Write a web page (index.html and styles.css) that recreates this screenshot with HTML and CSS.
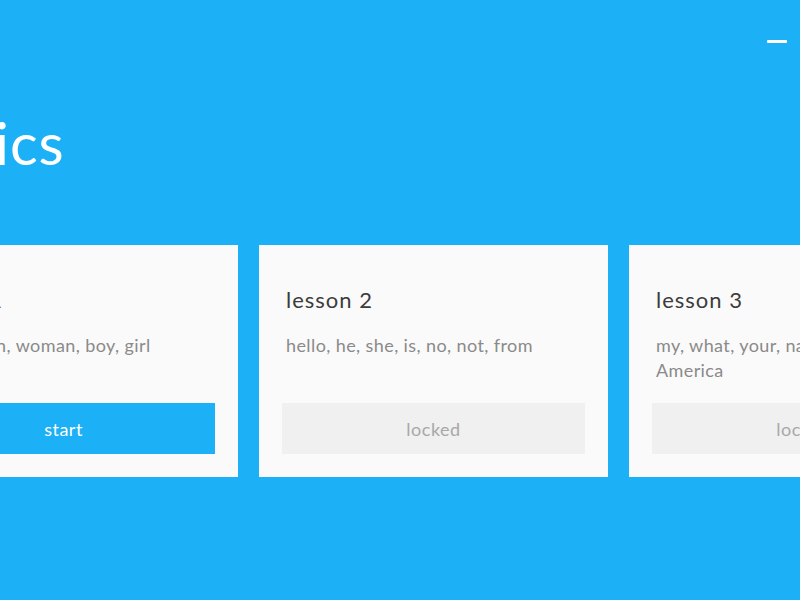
FILE: index.html
```html
<!DOCTYPE html>
<html lang="en">
<head>
<meta charset="utf-8">
<title>Basics</title>
<link rel="stylesheet" href="styles.css">
</head>
<body>
  <header class="topbar">
    <button class="minimize" aria-label="Minimize"><span class="minimize-bar"></span></button>
  </header>
  <main class="stage">
    <h1 class="skill-title">Basics</h1>
    <section class="lessons">
      <article class="lesson">
        <h2 class="lesson-name">lesson 1</h2>
        <p class="lesson-words">the, a, man, woman, boy, girl</p>
        <button class="lesson-btn lesson-btn--start">start</button>
      </article>
      <article class="lesson">
        <h2 class="lesson-name">lesson 2</h2>
        <p class="lesson-words">hello, he, she, is, no, not, from</p>
        <button class="lesson-btn lesson-btn--locked">locked</button>
      </article>
      <article class="lesson">
        <h2 class="lesson-name">lesson 3</h2>
        <p class="lesson-words">my, what, your, name, I, am, from America</p>
        <button class="lesson-btn lesson-btn--locked">locked</button>
      </article>
    </section>
  </main>
</body>
</html>
```
FILE: styles.css
```css
* {
  box-sizing: border-box;
}

html, body {
  margin: 0;
  height: 100%;
}

body {
  background: #1cb0f6;
  font-family: Lato, "Open Sans", sans-serif;
  overflow: hidden;
}

.topbar {
  display: flex;
  justify-content: flex-end;
  height: 108px;
  padding: 40px 13px 0 0;
}

.minimize {
  width: 20px;
  height: 3px;
  padding: 0;
  border: 0;
  background: none;
  cursor: pointer;
}

.minimize-bar {
  display: block;
  width: 20px;
  height: 3px;
  border-radius: 1px;
  background: #ffffff;
}

.stage {
  margin-left: -111px;
}

.skill-title {
  margin: 0;
  padding-left: 12px;
  font-size: 58px;
  line-height: 70px;
  font-weight: 400;
  color: #ffffff;
  letter-spacing: 1px;
}

.lessons {
  display: flex;
  gap: 21px;
  margin-top: 67px;
}

.lesson {
  flex: 0 0 349px;
  height: 232px;
  display: flex;
  flex-direction: column;
  padding: 40px 23px 23px;
  background: #fafafa;
}

.lesson-name {
  margin: 0;
  padding: 0 4px;
  font-size: 22px;
  line-height: 30px;
  font-weight: 400;
  letter-spacing: 1px;
  color: #3c3c3c;
}

.lesson-words {
  margin: 18px 0 0;
  padding: 0 4px;
  font-size: 18px;
  line-height: 25px;
  letter-spacing: 0.4px;
  color: #8a8a8a;
}

.lesson-btn {
  margin-top: auto;
  height: 51px;
  border: 0;
  font-family: inherit;
  font-size: 18px;
  letter-spacing: 0.5px;
}

.lesson-btn--start {
  background: #1cb0f6;
  color: #ffffff;
}

.lesson-btn--locked {
  background: #f0f0f0;
  color: #a8a8a8;
}
```
